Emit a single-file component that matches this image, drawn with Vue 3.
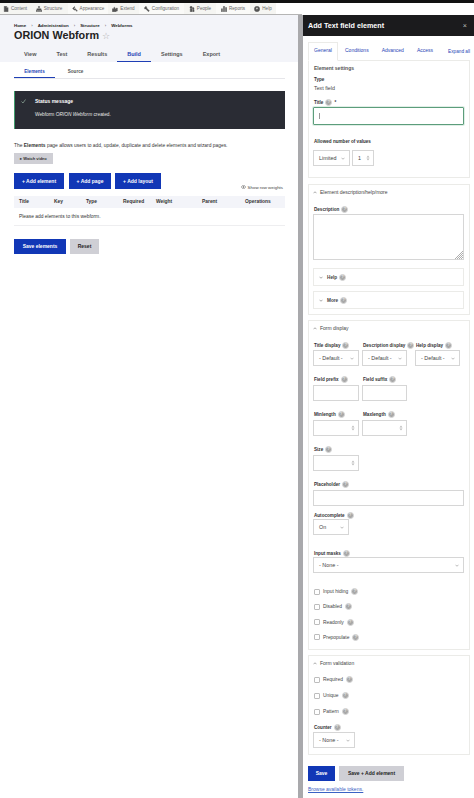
<script setup>
const toolbarItems = [
  { label: 'Content', width: 30, icon: 'M2 0.5h4l2.5 2.5v6.5h-6.5zM6 0.5v2.5h2.5' },
  { label: 'Structure', width: 38, icon: 'M4 0.5h2v2.5h-2zM0.5 6.5h2v3h-2zM4 6.5h2v3h-2zM7.5 6.5h2v3h-2zM1.5 6.5v-2h7v2M5 3v3.5' },
  { label: 'Appearance', width: 40, icon: 'M1 4l3-3 1 1-2 2 1 1 1-1 1 1-2 2zM6 5l3 3-1 1-3-3' },
  { label: 'Extend', width: 31, icon: 'M0.5 9.5v-5h2.5v-1.5a1 1 0 1 1 2 0v1.5h2v-1h2v5h-2v1zM3 9.5v-2h2v2' },
  { label: 'Configuration', width: 45, icon: 'M1 2.5l2-2 1.5 1v2l4.5 4.5-1.5 1.5-4.5-4.5h-2z' },
  { label: 'People', width: 32, icon: 'M3.5 0.5a1.5 1.5 0 0 1 0 4 1.5 1.5 0 0 1 0-4zM2 5h3v4.5h-3zM7 2.5a1.2 1.2 0 0 1 0 3 1.2 1.2 0 0 1 0-3zM6 6h2.5v3.5h-2.5z' },
  { label: 'Reports', width: 34, icon: 'M0.5 9.5v-5h2v5zM4 9.5v-9h2v9zM7.5 9.5v-7h2v7z' },
  { label: 'Help', width: 26, icon: 'M5 0.5a4.5 4.5 0 1 0 0 9 4.5 4.5 0 0 0 0-9zM3.5 3.8c0-2 3-2 3 0 0 1.2-1.5 1-1.5 2.4M5 7v1' }
]
const crumbs = ['Home', 'Administration', 'Structure', 'Webforms']
const tabs = ['View', 'Test', 'Results', 'Build', 'Settings', 'Export']
const columns = ['Title', 'Key', 'Type', 'Required', 'Weight', 'Parent', 'Operations']
const panelTabs = ['General', 'Conditions', 'Advanced', 'Access']
const displayChecks = ['Input hiding', 'Disabled', 'Readonly', 'Prepopulate']
const validationChecks = ['Required', 'Unique', 'Pattern']
</script>

<template>
  <div class="page">
    <header class="topbar">
      <div class="topbar-inner">
        <span v-for="item in toolbarItems" :key="item.label" class="tool" :style="{ width: item.width + 'px' }">
          <svg width="6" height="6" viewBox="0 0 10 10"><path :d="item.icon" fill="#555" stroke="#555" stroke-width="0.6" /></svg>
          {{ item.label }}
        </span>
      </div>
    </header>

    <div class="body">
      <main class="main">
        <section class="page-head">
          <nav class="crumbs">
            <template v-for="(crumb, i) in crumbs" :key="crumb">
              <span v-if="i" class="sep">›</span>
              <span>{{ crumb }}</span>
            </template>
          </nav>
          <h1>ORION Webform<span class="star">☆</span></h1>
          <nav class="tabs">
            <span v-for="tab in tabs" :key="tab" class="tab" :class="{ active: tab === 'Build' }">{{ tab }}</span>
          </nav>
        </section>

        <div class="content">
          <nav class="subtabs">
            <span class="subtab active">Elements</span>
            <span class="subtab">Source</span>
          </nav>

          <div class="status">
            <svg class="tick" width="5" height="5" viewBox="0 0 10 10"><path d="M1 5l3 3 5-7" fill="none" stroke="#8fa89a" stroke-width="1.5" /></svg>
            <div>
              <div class="status-title">Status message</div>
              <div class="status-text">Webform <em>ORION Webform</em> created.</div>
            </div>
          </div>

          <p class="intro">The <b>Elements</b> page allows users to add, update, duplicate and delete elements and wizard pages.</p>
          <span class="btn-video">▸ Watch video</span>

          <div class="actions">
            <span class="btn primary add w50">+ Add element</span>
            <span class="btn primary add w42">+ Add page</span>
            <span class="btn primary add w46">+ Add layout</span>
            <span class="weights">
              <svg width="5" height="4" viewBox="0 0 10 8"><path d="M0.5 4c3-4.500 6-4.500 9 0-3 4.500-6 4.500-9 0z" fill="none" stroke="#555" /><circle cx="5" cy="4" r="1.500" fill="#555" /></svg>
              Show row weights
            </span>
          </div>

          <div class="table-head">
            <span v-for="col in columns" :key="col">{{ col }}</span>
          </div>
          <div class="table-row">Please add elements to this webform.</div>

          <div class="form-actions">
            <span class="btn primary save">Save elements</span>
            <span class="btn grey reset">Reset</span>
          </div>
        </div>
      </main>

      <aside class="panel">
        <div class="panel-title">
          <span>Add Text field element</span>
          <span class="close">×</span>
        </div>
        <div class="panel-body">
          <div class="panel-tabs">
            <span v-for="tab in panelTabs" :key="tab" class="panel-tab" :class="{ active: tab === 'General' }">{{ tab }}</span>
            <span class="expand">Expand all</span>
          </div>

          <section class="box box-settings">
            <div class="legend plain">Element settings</div>
            <div class="label mt-type">Type</div>
            <div class="value">Text field</div>
            <div class="label mt-title">Title <i class="q">?</i> <span class="req">*</span></div>
            <div class="input focused"><span class="caret"></span></div>
            <div class="label mt-allowed">Allowed number of values</div>
            <div class="row">
              <span class="input select w37">Limited <svg class="chev" viewBox="0 0 8 5"><path d="M1 1l3 3 3-3" /></svg></span>
              <span class="input number w22">1 <svg class="spin" viewBox="0 0 4 6"><path d="M2 0.500l1.500 2h-3zM2 5.500l1.500-2h-3z" /></svg></span>
            </div>
          </section>

          <section class="box box-desc">
            <div class="legend"><svg class="fold" viewBox="0 0 8 5"><path d="M1 4l3-3 3 3" /></svg>Element description/help/more</div>
            <div class="label mt-desc">Description <i class="q">?</i></div>
            <div class="input textarea">
              <svg width="8" height="8" viewBox="0 0 8 8"><path d="M8 0L0 8M8 2L2 8M8 4L4 8M8 6L6 8" stroke="#777" stroke-width="0.6" /></svg>
            </div>
            <div class="sub-box first"><svg class="fold" viewBox="0 0 8 5"><path d="M1 1l3 3 3-3" /></svg>Help <i class="q">?</i></div>
            <div class="sub-box"><svg class="fold" viewBox="0 0 8 5"><path d="M1 1l3 3 3-3" /></svg>More <i class="q">?</i></div>
          </section>

          <section class="box box-display">
            <div class="legend"><svg class="fold" viewBox="0 0 8 5"><path d="M1 4l3-3 3 3" /></svg>Form display</div>
            <div class="grid-three mt-display">
              <span class="label">Title display <i class="q">?</i></span>
              <span class="label">Description display <i class="q">?</i></span>
              <span class="label">Help display <i class="q">?</i></span>
            </div>
            <div class="grid-three">
              <span class="input select">- Default - <svg class="chev" viewBox="0 0 8 5"><path d="M1 1l3 3 3-3" /></svg></span>
              <span class="input select">- Default - <svg class="chev" viewBox="0 0 8 5"><path d="M1 1l3 3 3-3" /></svg></span>
              <span class="input select">- Default - <svg class="chev" viewBox="0 0 8 5"><path d="M1 1l3 3 3-3" /></svg></span>
            </div>
            <div class="grid-two labels mt-field">
              <span class="label">Field prefix <i class="q">?</i></span>
              <span class="label">Field suffix <i class="q">?</i></span>
            </div>
            <div class="grid-two">
              <span class="input"></span>
              <span class="input"></span>
            </div>
            <div class="grid-two labels mt-field">
              <span class="label">Minlength <i class="q">?</i></span>
              <span class="label">Maxlength <i class="q">?</i></span>
            </div>
            <div class="grid-two">
              <span class="input number"><svg class="spin" viewBox="0 0 4 6"><path d="M2 0.500l1.500 2h-3zM2 5.500l1.500-2h-3z" /></svg></span>
              <span class="input number"><svg class="spin" viewBox="0 0 4 6"><path d="M2 0.500l1.500 2h-3zM2 5.500l1.500-2h-3z" /></svg></span>
            </div>
            <div class="label mt-field">Size <i class="q">?</i></div>
            <div class="grid-two">
              <span class="input number"><svg class="spin" viewBox="0 0 4 6"><path d="M2 0.500l1.500 2h-3zM2 5.500l1.500-2h-3z" /></svg></span>
            </div>
            <div class="label mt-field">Placeholder <i class="q">?</i></div>
            <div class="input"></div>
            <div class="label mt-auto">Autocomplete <i class="q">?</i></div>
            <span class="input select w36">On <svg class="chev" viewBox="0 0 8 5"><path d="M1 1l3 3 3-3" /></svg></span>
            <div class="label mt-masks">Input masks <i class="q">?</i></div>
            <div class="input select">- None - <svg class="chev" viewBox="0 0 8 5"><path d="M1 1l3 3 3-3" /></svg></div>
            <div class="checks mt-checks">
              <label v-for="check in displayChecks" :key="check" class="check">
                <span class="checkbox"></span>{{ check }} <i class="q">?</i>
              </label>
            </div>
          </section>

          <section class="box box-valid">
            <div class="legend"><svg class="fold" viewBox="0 0 8 5"><path d="M1 4l3-3 3 3" /></svg>Form validation</div>
            <div class="checks mt-valid">
              <label v-for="check in validationChecks" :key="check" class="check">
                <span class="checkbox"></span>{{ check }} <i class="q">?</i>
              </label>
            </div>
            <div class="label mt-counter">Counter <i class="q">?</i></div>
            <span class="input select w42">- None - <svg class="chev" viewBox="0 0 8 5"><path d="M1 1l3 3 3-3" /></svg></span>
          </section>

          <div class="panel-actions">
            <span class="btn primary psave">Save</span>
            <span class="btn grey padd">Save + Add element</span>
          </div>
          <a class="tokens">Browse available tokens.</a>
        </div>
      </aside>
    </div>
  </div>
</template>

<style>
html, body {
  margin: 0;
  background: #fff;
}
</style>

<style scoped>
.page {
  width: 474px;
  height: 798px;
  overflow: hidden;
  font-family: "Liberation Sans", Arial, sans-serif;
  color: #333;
  font-size: 5px;
  line-height: 7px;
}
.topbar {
  height: 15px;
  box-sizing: border-box;
  border-top: 3px solid #111;
  background: #fff;
}
.topbar-inner {
  display: flex;
  height: 12px;
  width: 302px;
  background: #fff;
  border-bottom: 1px solid #b5b5b5;
  box-sizing: border-box;
}
.tool {
  display: flex;
  align-items: center;
  justify-content: center;
  gap: 2px;
  color: #666;
  font-size: 4.6px;
  background: #f5f5f2;
  box-sizing: border-box;
}
.tool:nth-child(3), .tool:nth-child(5), .tool:nth-child(7) {
  background: #fafaf8;
}
.body {
  display: flex;
  height: 783px;
}
.main {
  width: 298px;
  flex: none;
}
.page-head {
  height: 47px;
  box-sizing: border-box;
  background: #f3f4f9;
  padding: 8px 14px 0;
}
.crumbs {
  display: flex;
  gap: 5px;
  font-size: 4.4px;
  font-weight: bold;
  line-height: 6px;
  color: #222;
}
.sep {
  color: #777;
}
h1 {
  margin: 0;
  font-size: 10.8px;
  line-height: 13px;
  font-weight: bold;
  color: #222;
}
.star {
  margin-left: 3px;
  color: #aaa;
  font-weight: normal;
  font-size: 9px;
}
.tabs {
  display: flex;
  margin-top: 3px;
}
.tab {
  height: 16px;
  line-height: 16px;
  padding: 0 10px;
  box-sizing: border-box;
  text-align: center;
  font-size: 5.5px;
  font-weight: bold;
  color: #555;
}
.tab.active {
  color: #1f3fb5;
  border-bottom: 1px solid #1f3fb5;
}
.content {
  padding: 0 13px 0 14px;
}
.subtabs {
  display: flex;
  height: 17px;
  border-bottom: 1px solid #e6e6ea;
  box-sizing: border-box;
}
.subtab {
  width: 41px;
  text-align: center;
  font-weight: bold;
  font-size: 4.6px;
  line-height: 20px;
  color: #555;
}
.subtab.active {
  color: #1f3fb5;
  border-bottom: 1px solid #1f3fb5;
}
.status {
  display: flex;
  gap: 9px;
  margin-top: 12px;
  height: 38px;
  box-sizing: border-box;
  background: #2a2c34;
  border-left: 1px solid #3f9b6b;
  padding: 7px 0 0 6px;
  color: #fff;
}
.tick {
  margin-top: 1px;
}
.status-title {
  font-weight: bold;
  font-size: 5px;
}
.status-text {
  margin-top: 6px;
  font-size: 4.8px;
  color: #e8e8e8;
}
.intro {
  margin: 13px 0 0;
  height: 7px;
  font-size: 4.9px;
  white-space: nowrap;
}
.btn-video {
  display: block;
  margin-top: 4px;
  width: 39px;
  height: 11px;
  line-height: 11px;
  text-align: center;
  background: #cfcfd5;
  font-size: 4px;
  font-weight: bold;
}
.actions {
  display: flex;
  gap: 4px;
  margin-top: 9px;
  height: 16px;
}
.btn {
  display: block;
  text-align: center;
  font-weight: bold;
  box-sizing: border-box;
}
.primary {
  background: #1137b6;
  color: #fff;
}
.grey {
  background: #cfcfd5;
  color: #222;
}
.add {
  line-height: 16px;
  font-size: 5px;
}
.add:first-child {
  margin-right: 1px;
}
.w50 { width: 50px; }
.w42 { width: 42px; }
.w46 { width: 46px; }
.weights {
  margin-left: auto;
  align-self: flex-end;
  margin-right: 2px;
  margin-bottom: -2px;
  font-size: 4.4px;
  color: #444;
}
.table-head {
  display: grid;
  grid-template-columns: 35px 32px 37px 33px 46px 43px 1fr;
  height: 12px;
  margin-top: 7px;
  padding-left: 5px;
  line-height: 12px;
  background: #f3f4f9;
  font-size: 4.9px;
  font-weight: bold;
}
.table-row {
  height: 17px;
  padding-left: 5px;
  line-height: 18px;
  border-bottom: 1px solid #eeeef0;
  font-size: 4.9px;
}
.form-actions {
  display: flex;
  gap: 4px;
  margin-top: 13px;
}
.save {
  width: 52px;
  height: 15px;
  line-height: 15px;
}
.reset {
  width: 29px;
  height: 15px;
  line-height: 15px;
}
.panel {
  width: 176px;
  flex: none;
  border-left: 5px solid #a9a9ac;
  box-sizing: border-box;
}
.panel-title {
  display: flex;
  justify-content: space-between;
  align-items: center;
  height: 21px;
  padding: 0 7px 0 5px;
  background: #1b1b1d;
  color: #fff;
  font-size: 7.2px;
  font-weight: bold;
}
.close {
  font-weight: normal;
  color: #bbb;
}
.panel-body {
  padding: 6px 4px 0 5px;
}
.panel-tabs {
  display: flex;
  height: 19px;
  position: relative;
  z-index: 1;
  align-items: flex-start;
  color: #1f3fb5;
  font-size: 5px;
}
.panel-tab {
  height: 19px;
  line-height: 14px;
  margin-right: 11px;
  box-sizing: border-box;
  border: 1px solid transparent;
}
.panel-tab.active {
  background: #fff;
  border-color: #ebebe8;
  border-bottom-color: #fff;
  padding: 0 5px;
  width: 30px;
  margin-right: 6px;
}
.expand {
  margin-left: auto;
  margin-top: 5px;
  line-height: 9px;
  font-size: 4.7px;
}
.box {
  border: 1px solid #ebebe8;
  box-sizing: border-box;
  padding: 0 5px 0 4px;
}
.box-settings { height: 118px; margin-top: -1px; }
.box-desc { height: 131px; margin-top: 6px; }
.box-display { height: 330px; margin-top: 5px; }
.box-valid { height: 100px; margin-top: 5px; }
.legend {
  display: flex;
  align-items: center;
  margin-top: 4px;
  height: 7px;
  font-size: 5px;
  color: #444;
}
.legend.plain {
  padding-left: 1px;
  font-weight: bold;
  color: #555;
}
.fold {
  width: 4px;
  height: 3px;
  margin-right: 3px;
  fill: none;
  stroke: #555;
  stroke-width: 1;
  flex: none;
}
.label {
  display: flex;
  align-items: center;
  gap: 2px;
  height: 7px;
  padding-left: 1px;
  font-size: 4.6px;
  font-weight: bold;
  color: #333;
  white-space: nowrap;
}
.value {
  height: 7px;
  padding-left: 1px;
  font-size: 5.3px;
  line-height: 8px;
  color: #444;
}
.q {
  display: inline-block;
  flex: none;
  width: 7px;
  height: 7px;
  border-radius: 50%;
  background: #a8a8a8;
  border: 1px solid #d8d8d8;
  box-sizing: border-box;
  color: #eee;
  font-size: 3.6px;
  font-style: normal;
  font-weight: bold;
  line-height: 5px;
  text-align: center;
}
.req {
  color: #333;
}
.mt-type { margin: 4px 0 1px; }
.mt-title { margin-top: 8px; }
.mt-allowed { margin: 13px 0 5px; }
.mt-desc { margin: 10px 0 1px; }
.mt-display { margin: 10px 0 1px; }
.mt-field { margin: 10px 0 2px; }
.mt-auto { margin: 6px 0 0; }
.mt-masks { margin: 15px 0 0; }
.input {
  display: block;
  position: relative;
  height: 16px;
  box-sizing: border-box;
  border: 1px solid #d6d6d6;
  background: #fff;
  font-size: 5.4px;
  line-height: 14px;
  color: #444;
  padding: 0 4px 0 5px;
}
.input.focused {
  height: 18px;
  border: 1px solid #5c9d7b;
  box-shadow: 0 0 0 1px #dfeee6;
  border-radius: 1px;
  margin-top: 1px;
}
.caret {
  display: block;
  width: 1px;
  height: 6px;
  margin-top: 5px;
  background: #999;
}
.chev {
  position: absolute;
  right: 4px;
  top: 6px;
  width: 4px;
  height: 3px;
  fill: none;
  stroke: #666;
  stroke-width: 0.9;
}
.spin {
  position: absolute;
  right: 3px;
  top: 4px;
  width: 4px;
  height: 6px;
  fill: #bbb;
}
.row {
  display: flex;
  gap: 2px;
}
.w37 { width: 37px; }
.w22 { width: 22px; }
.w36 { width: 36px; }
.w42 { width: 42px; }
.textarea {
  height: 46px;
}
.textarea svg {
  position: absolute;
  right: 0;
  bottom: 0;
}
.sub-box {
  display: flex;
  align-items: center;
  gap: 1px;
  height: 18px;
  margin-top: 5px;
  padding-left: 5px;
  border: 1px solid #ebebe8;
  box-sizing: border-box;
  font-size: 4.7px;
  font-weight: bold;
  color: #444;
}
.sub-box .q {
  margin-left: 1px;
}
.sub-box.first {
  margin-top: 8px;
}
.grid-three {
  display: flex;
  gap: 3px;
}
.grid-three > * {
  flex: none;
  width: 45px;
  box-sizing: border-box;
}
.grid-three > :first-child {
  width: 46px;
}
.grid-three > :last-child {
  margin-left: 5px;
}
.grid-two {
  display: grid;
  grid-template-columns: 46px 45px;
  column-gap: 3px;
}
.checks {
  display: flex;
  flex-direction: column;
  padding-left: 1px;
}
.mt-checks { margin-top: 15px; gap: 8.300px; }
.mt-valid { margin-top: 9px; gap: 9px; }
.check {
  display: flex;
  align-items: center;
  gap: 3px;
  height: 7px;
  font-size: 4.9px;
  color: #444;
}
.checkbox {
  width: 6px;
  height: 6px;
  border: 1px solid #bdbdbd;
  border-radius: 1px;
  box-sizing: border-box;
}
.mt-counter { margin: 9px 0 1px; }
.panel-actions {
  display: flex;
  gap: 4px;
  margin-top: 11px;
}
.psave {
  width: 27px;
  height: 15px;
  line-height: 15px;
}
.padd {
  width: 65px;
  height: 15px;
  line-height: 15px;
}
.tokens {
  display: block;
  margin-top: 5px;
  color: #3a62c4;
  text-decoration: underline;
  font-size: 5px;
}
</style>
